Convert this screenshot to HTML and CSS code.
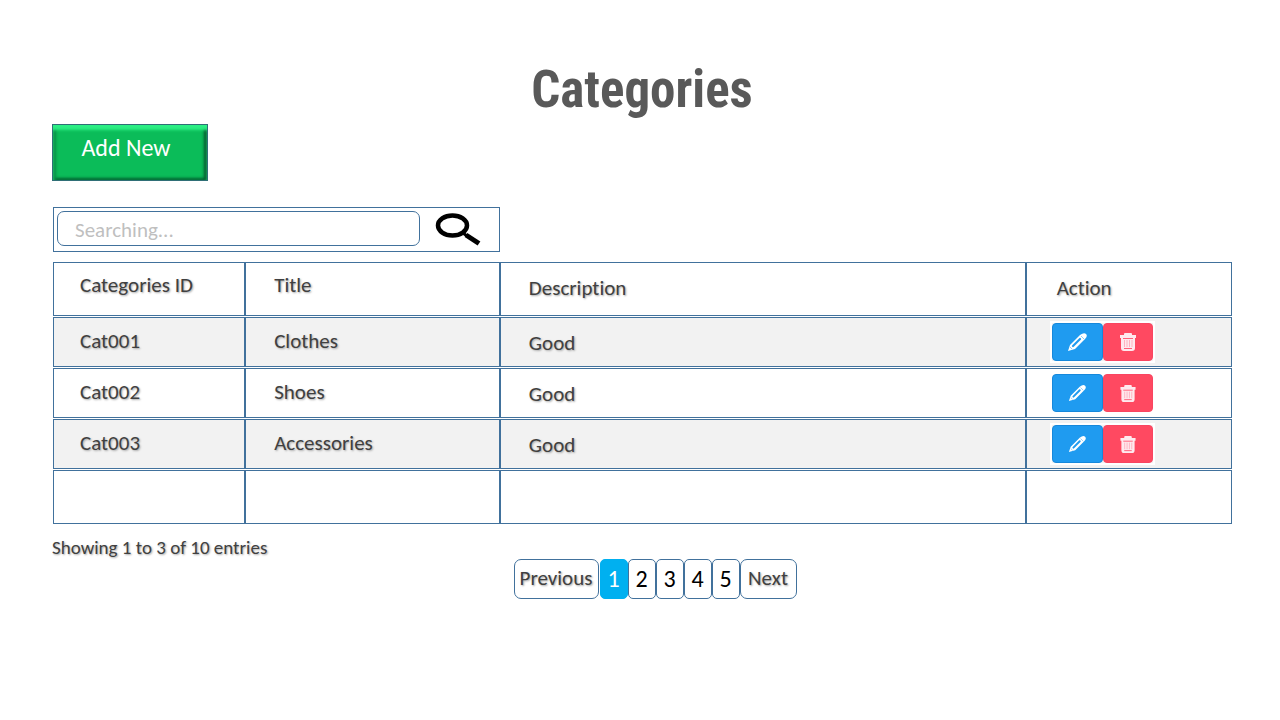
FILE: index.html
```html
<!DOCTYPE html>
<html lang="en">
<head>
<meta charset="utf-8">
<meta name="viewport" content="width=device-width, initial-scale=1">
<title>Categories</title>
<link rel="stylesheet" href="styles.css">
</head>
<body>
<svg class="sprite" aria-hidden="true">
  <symbol id="pencil" viewBox="0 0 20 20">
    <path d="M1 19l2-6L13 3q4-3 6-1t-1 5L8 17z" fill="#fff"/>
    <path d="M6 14l7-7" fill="none" stroke="#1f9bf0" stroke-width="2.2" stroke-linecap="round"/>
    <path d="M14 4l3 3" fill="none" stroke="#8bccfa" stroke-width="1"/>
    <path d="M3 15l2 2" fill="none" stroke="#8bccfa" stroke-width="1"/>
  </symbol>
  <symbol id="trash" viewBox="0 0 16 18">
    <path d="M0 2h4V1q0-1 1-1h6q1 0 1 1v1h4v3h-1v10q0 3-3 3H4q-3 0-3-3V5H0z" fill="#ffe9ee"/>
    <path d="M3 5.500h10M4 15.500h8" fill="none" stroke="#ff6079" stroke-width="1"/>
    <path d="M4.500 7v7M7 7v7M9.500 7v7M12 7v7" fill="none" stroke="#ffb3c0" stroke-width="1"/>
  </symbol>
</svg>
<main class="page">
  <h1 class="title">Categories</h1>
  <button class="add" type="button">Add New</button>

  <form class="search" role="search">
    <input class="search-input" type="search" placeholder="Searching..." aria-label="Search categories">
    <button class="search-button" type="button" aria-label="Search">
      <svg width="46" height="34" viewBox="0 0 46 34" aria-hidden="true">
        <ellipse cx="17.500" cy="12.500" rx="14.500" ry="10" fill="none" stroke="#000" stroke-width="4.500"/>
        <path d="M28 20l4 3" stroke="#000" stroke-width="3"/>
        <path d="M31 22l13 8.500" stroke="#000" stroke-width="5"/>
      </svg>
    </button>
  </form>

  <table class="grid">
    <colgroup><col class="col-id"><col class="col-title"><col class="col-desc"><col class="col-action"></colgroup>
    <thead>
      <tr><th scope="col">Categories ID</th><th scope="col">Title</th><th scope="col">Description</th><th scope="col">Action</th></tr>
    </thead>
    <tbody>
      <tr class="shaded">
        <td>Cat001</td><td>Clothes</td><td>Good</td>
        <td><div class="actions"><button class="edit" type="button" aria-label="Edit Cat001"><svg width="20" height="20"><use href="#pencil"/></svg></button><button class="delete" type="button" aria-label="Delete Cat001"><svg width="16" height="18"><use href="#trash"/></svg></button></div></td>
      </tr>
      <tr>
        <td>Cat002</td><td>Shoes</td><td>Good</td>
        <td><div class="actions"><button class="edit" type="button" aria-label="Edit Cat002"><svg width="20" height="18"><use href="#pencil"/></svg></button><button class="delete" type="button" aria-label="Delete Cat002"><svg width="16" height="17"><use href="#trash"/></svg></button></div></td>
      </tr>
      <tr class="shaded">
        <td>Cat003</td><td>Accessories</td><td>Good</td>
        <td><div class="actions"><button class="edit" type="button" aria-label="Edit Cat003"><svg width="20" height="18"><use href="#pencil"/></svg></button><button class="delete" type="button" aria-label="Delete Cat003"><svg width="16" height="17"><use href="#trash"/></svg></button></div></td>
      </tr>
      <tr class="blank"><td></td><td></td><td></td><td></td></tr>
    </tbody>
  </table>

  <p class="summary">Showing 1 to 3 of 10 entries</p>
  <nav class="pages" aria-label="Pagination">
    <button class="step previous" type="button">Previous</button>
    <button class="number current" type="button" aria-current="page">1</button>
    <button class="number" type="button">2</button>
    <button class="number" type="button">3</button>
    <button class="number" type="button">4</button>
    <button class="number" type="button">5</button>
    <button class="step next" type="button">Next</button>
  </nav>
</main>
</body>
</html>
```
FILE: styles.css
```css
* { box-sizing: border-box; }

body {
  margin: 0;
  background: #fff;
  color: #404040;
  font-family: Carlito, Lato, sans-serif;
  font-size: 21px;
  font-variant-ligatures: none;
}

button, input { font: inherit; color: inherit; }
button { padding: 0; cursor: pointer; }

.sprite { display: block; width: 0; height: 0; }

.page { padding: 56px 48px 40px 52px; }

.title {
  margin: 0;
  color: #595959;
  font-family: "Roboto Condensed", Roboto, sans-serif;
  font-size: 51px;
  font-weight: 700;
  line-height: 68px;
  text-align: center;
}

.add {
  display: block;
  width: 156px;
  height: 57px;
  padding: 0 8px 10px 0;
  border: 1px solid #2f6f76;
  background: #0bbc59;
  box-shadow: inset 0 5px 3px #2bee83, inset 3px 0 3px #078a45, inset -3px 0 3px #05532c, inset 0 -2px 3px #056b37;
  color: #fff;
  font-size: 24px;
}

.search {
  display: flex;
  align-items: center;
  width: 447px;
  max-width: 100%;
  height: 45px;
  margin: 26px 0 9px 1px;
  padding: 0 18px 0 3px;
  border: 1px solid #41719c;
}

.search-input {
  flex: 1;
  min-width: 0;
  height: 35px;
  margin-bottom: 2px;
  padding: 2px 17px 0;
  border: 1px solid #41719c;
  border-radius: 7px;
  outline: 0;
  background: #fff;
}

.search-input::placeholder { color: #bfbfbf; opacity: 1; }

.search-button {
  display: flex;
  margin-left: 15px;
  border: 0;
  background: none;
}

.grid {
  width: 100%;
  padding-left: 1px;
  border-spacing: 0 1px;
  table-layout: fixed;
}

.col-id { width: 16.3%; }
.col-title { width: 21.6%; }
.col-desc { width: 44.6%; }
.col-action { width: 17.5%; }

.grid th, .grid td {
  height: 50px;
  padding: 0 0 2px 28px;
  border: 1px solid #41719c;
  font-weight: 400;
  line-height: 24px;
  text-align: left;
  vertical-align: middle;
}

.grid th { height: 54px; }
.grid .blank td { height: 54px; }
.grid th:nth-child(-n+2) { padding-bottom: 8px; }
.grid tr > :nth-child(1) { padding-left: 26px; }
.grid td:nth-child(3) { padding-top: 4px; }
.grid th:nth-child(4) { padding-left: 30px; }
.grid td:nth-child(4) { padding: 0 0 0 25px; }
.shaded td { background: #f2f2f2; }

.grid th, .grid td, .summary, .step { text-shadow: 1px 1px 2px #a6a6a6; }

.actions { display: flex; }

.edit, .delete {
  display: flex;
  align-items: center;
  justify-content: center;
  height: 38px;
  border: 1px solid;
  border-radius: 4px;
}

.edit { width: 51px; border-color: #1688db; background: #1f9bf0; }
.delete { width: 50px; border-color: #f94561; background: #ff4961; }
.shaded .actions { width: 101px; box-shadow: 0 0 0 2px #fff; }

.summary { margin: 12px 0 0; font-size: 19px; line-height: 22px; }

.pages {
  display: flex;
  justify-content: center;
  padding-left: 26px;
}

.step, .number {
  height: 40px;
  padding-bottom: 2px;
  border: 1px solid #41719c;
  border-radius: 7px;
  background: #fff;
}

.number { width: 28px; color: #000; font-size: 24px; border-radius: 5px; }
.number.current { border-color: #00b0f0; background: #00b0f0; color: #fff; }
.previous { width: 85px; margin-right: 1px; }
.next { width: 57px; }
```
